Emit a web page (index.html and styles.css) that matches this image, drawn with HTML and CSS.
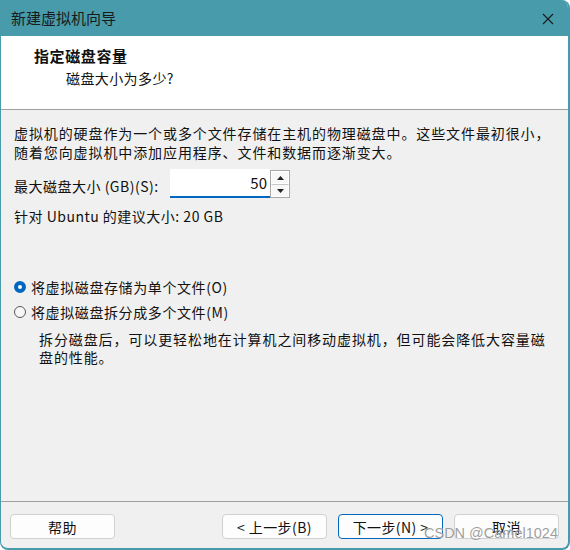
FILE: index.html
```html
<!DOCTYPE html>
<html lang="zh-CN">
<head>
<meta charset="utf-8">
<title>新建虚拟机向导</title>
<link rel="stylesheet" href="styles.css">
</head>
<body>
<div class="window">
  <div class="titlebar">
    <span class="title">新建虚拟机向导</span>
    <svg class="close" width="12" height="12" viewBox="0 0 12 12"><path d="M1 1L11 11M11 1L1 11" stroke="#1a1a1a" stroke-width="1.1" fill="none"/></svg>
  </div>
  <div class="header">
    <div class="heading">指定磁盘容量</div>
    <div class="subheading">磁盘大小为多少?</div>
  </div>
  <div class="content">
    <p class="intro">虚拟机的硬盘作为一个或多个文件存储在主机的物理磁盘中。这些文件最初很小，<br>随着您向虚拟机中添加应用程序、文件和数据而逐渐变大。</p>
    <div class="size-row">
      <span class="label">最大磁盘大小 (GB)(S):</span>
      <div class="input">50</div>
      <div class="spinner">
        <div class="spin-btn"><svg width="7" height="4" viewBox="0 0 7 4"><path d="M3.5 0L7 4H0Z" fill="#222"/></svg></div>
        <div class="spin-btn"><svg width="7" height="4" viewBox="0 0 7 4"><path d="M0 0H7L3.5 4Z" fill="#222"/></svg></div>
      </div>
    </div>
    <p class="recommend">针对 Ubuntu 的建议大小: 20 GB</p>
    <div class="options">
      <label class="radio-row"><span class="radio checked"></span>将虚拟磁盘存储为单个文件(O)</label>
      <label class="radio-row"><span class="radio"></span>将虚拟磁盘拆分成多个文件(M)</label>
      <p class="desc">拆分磁盘后，可以更轻松地在计算机之间移动虚拟机，但可能会降低大容量磁<br>盘的性能。</p>
    </div>
  </div>
  <div class="footer">
    <button class="btn">帮助</button>
    <div class="spacer"></div>
    <button class="btn">&lt; 上一步(B)</button>
    <button class="btn primary">下一步(N) &gt;</button>
    <button class="btn">取消</button>
  </div>
  <div class="watermark">CSDN @Camel1024</div>
</div>
</body>
</html>
```
FILE: styles.css
```css
* { box-sizing: border-box; }
html, body { margin: 0; padding: 0; background: #ffffff; }
body {
  width: 570px;
  height: 550px;
  font-family: "Noto Sans CJK SC", "Noto Sans", sans-serif;
  color: #111;
  font-size: 14px;
  letter-spacing: 0.9px;
}
.window {
  position: relative;
  width: 570px;
  height: 550px;
  display: flex;
  flex-direction: column;
  background: #f0f0f0;
  border-style: solid;
  border-color: #479bab;
  border-width: 0 2px 2px 1px;
  border-radius: 0 8px 8px 8px;
  overflow: hidden;
}
.titlebar {
  height: 36px;
  flex: none;
  background: #479bab;
  display: flex;
  align-items: center;
  padding: 0 14px 0 10px;
}
.title {
  flex: 1;
  font-size: 15px;
  letter-spacing: 0;
  color: #1a1a1a;
  line-height: 20px;
}
.close { display: block; margin-top: 1px; }
.header {
  height: 74px;
  flex: none;
  background: #ffffff;
  border-bottom: 1px solid #a0a0a0;
  padding: 9px 0 0 33px;
}
.heading {
  font-size: 15px;
  font-weight: bold;
  letter-spacing: 0.6px;
  line-height: 22px;
}
.subheading {
  line-height: 22px;
  padding-left: 32px;
  letter-spacing: 0.4px;
}
.content {
  flex: 1;
  padding: 14px 0 0 13px;
}
.intro {
  margin: 0;
  line-height: 19px;
}
.size-row {
  display: flex;
  align-items: flex-start;
  margin-top: 7px;
  height: 29px;
}
.label {
  width: 156px;
  line-height: 19px;
  padding-top: 8px;
  letter-spacing: 0.5px;
}
.input {
  width: 100px;
  height: 29px;
  background: #ffffff;
  border-bottom: 2px solid #0067c0;
  text-align: right;
  padding-right: 3px;
  line-height: 27px;
  font-size: 15px;
  letter-spacing: 0;
}
.spinner {
  width: 20px;
  height: 28px;
  margin-top: 1px;
  border: 1px solid #a8a8a8;
  display: flex;
  flex-direction: column;
  background: #f0f0f0;
}
.spin-btn {
  flex: 1;
  display: flex;
  align-items: center;
  justify-content: center;
  background: #f7f7f7;
  border: 1px solid #ffffff;
}
.spin-btn + .spin-btn { border-top: 1px solid #c8c8c8; }
.recommend {
  margin: 9px 0 0;
  line-height: 19px;
  letter-spacing: 0.5px;
}
.options {
  margin-top: 49px;
}
.radio-row {
  display: flex;
  align-items: center;
  height: 24px;
  line-height: 19px;
  letter-spacing: 0.6px;
}
.radio-row + .radio-row { margin-top: 1px; }
.radio {
  width: 12px;
  height: 12px;
  border-radius: 50%;
  border: 1px solid #5a5a5a;
  background: #f6f6f6;
  margin-right: 5px;
  flex: none;
}
.radio.checked {
  border: 4px solid #0067c0;
  background: #ffffff;
}
.desc {
  margin: 6px 0 0 25px;
  line-height: 18px;
}
.footer {
  height: 47px;
  flex: none;
  border-top: 1px solid #a0a0a0;
  display: flex;
  align-items: flex-start;
  padding: 12px 9px 0 9px;
  gap: 11px;
}
.spacer { flex: 1; }
.btn {
  width: 105px;
  height: 25px;
  font-family: inherit;
  font-size: 14px;
  letter-spacing: 0.4px;
  color: #111;
  background: #fdfdfd;
  border: 1px solid #d0d0d0;
  border-radius: 4px;
  padding: 0;
  line-height: 22px;
}
.btn.primary {
  border: 1px solid #0067c0;
}
.watermark {
  position: absolute;
  left: 423px;
  top: 523px;
  font-family: "Liberation Sans", Arial, sans-serif;
  font-size: 14.5px;
  letter-spacing: 0;
  color: rgba(140, 140, 140, 0.85);
  text-shadow: 0 0 1px rgba(255,255,255,0.9);
  line-height: 20px;
}
```
